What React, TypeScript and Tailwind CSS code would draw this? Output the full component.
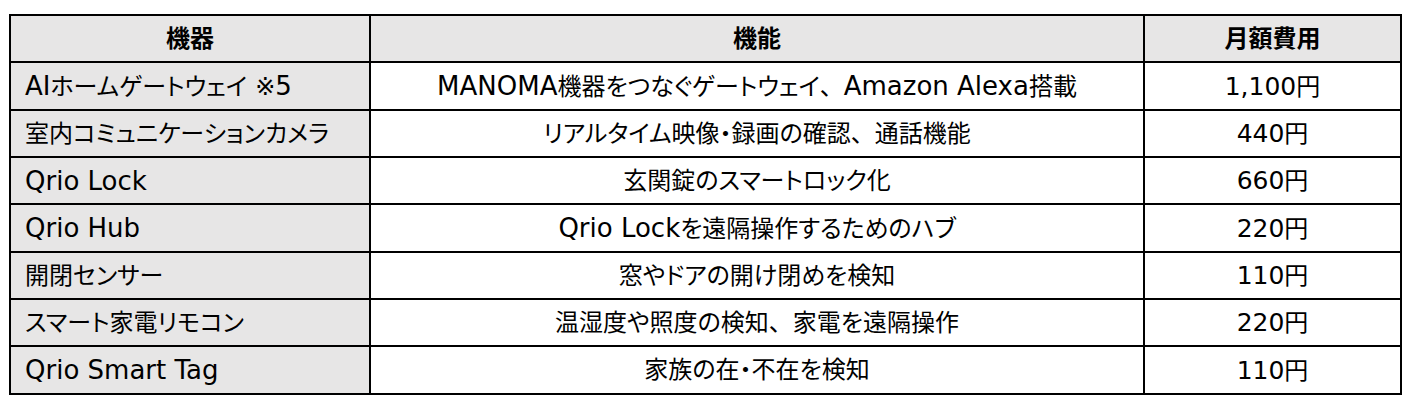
const rows = [
  { device: "AIホームゲートウェイ ※5", feature: "MANOMA機器をつなぐゲートウェイ、Amazon Alexa搭載", price: "1,100円", h: "h-[46px]" },
  { device: "室内コミュニケーションカメラ", feature: "リアルタイム映像・録画の確認、通話機能", price: "440円", h: "h-[45px]" },
  { device: "Qrio Lock", feature: "玄関錠のスマートロック化", price: "660円", h: "h-[45px]" },
  { device: "Qrio Hub", feature: "Qrio Lockを遠隔操作するためのハブ", price: "220円", h: "h-[46px]" },
  { device: "開閉センサー", feature: "窓やドアの開け閉めを検知", price: "110円", h: "h-[45px]" },
  { device: "スマート家電リモコン", feature: "温湿度や照度の検知、家電を遠隔操作", price: "220円", h: "h-[45px]" },
  { device: "Qrio Smart Tag", feature: "家族の在・不在を検知", price: "110円", h: "h-[46px]" },
];

// Latin and Japanese runs get their own sizes, like the original's mixed fonts
const cjk = /[\u3000-\u30ff\u4e00-\u9fff\uff00-\uffef\u203b]/;

type Kind = "latin" | "jp" | "comma";

const Mixed = ({ text, latin = "text-[26px]" }: { text: string; latin?: string }) => {
  const runs: { s: string; k: Kind }[] = [];
  for (const ch of text) {
    const k: Kind = ch === "、" ? "comma" : cjk.test(ch) ? "jp" : "latin";
    const last = runs[runs.length - 1];
    if (last && last.k === k) last.s += ch;
    else runs.push({ s: ch, k });
  }
  return (
    <span className="whitespace-nowrap">
      {runs.map((r, i) => (
        <span
          key={i}
          className={
            r.k === "jp"
              ? "text-[24px] [font-feature-settings:'palt']"
              : r.k === "comma"
                ? "text-[24px]"
                : latin
          }
        >
          {r.s}
        </span>
      ))}
    </span>
  );
};

const App = () => {
  return (
    <div
      className="w-[1420px] h-[404px] bg-white pt-[14px] pl-[9px] text-black leading-none"
      style={{ fontFamily: '"DejaVu Sans", "Noto Sans CJK JP", sans-serif' }}
    >
      <div className="w-[1393px] grid grid-cols-[358px_772px_255px] gap-[2px] p-[2px] bg-black">
        {/* Header */}
        <div className="h-[45px] bg-[#e7e6e6] flex items-center justify-center font-bold">
          <Mixed text="機器" />
        </div>
        <div className="h-[45px] bg-[#e7e6e6] flex items-center justify-center font-bold">
          <Mixed text="機能" />
        </div>
        <div className="h-[45px] bg-[#e7e6e6] flex items-center justify-center font-bold">
          <Mixed text="月額費用" />
        </div>

        {rows.map((row) => (
          <div key={row.device} className="contents">
            <div className={`${row.h} bg-[#e7e6e6] flex items-center pl-[14px]`}>
              <Mixed text={row.device} />
            </div>
            <div className={`${row.h} bg-white flex items-center justify-center`}>
              <Mixed text={row.feature} />
            </div>
            <div className={`${row.h} bg-white flex items-center justify-center`}>
              <Mixed text={row.price} latin="text-[25px]" />
            </div>
          </div>
        ))}
      </div>
    </div>
  );
};

export default App;
